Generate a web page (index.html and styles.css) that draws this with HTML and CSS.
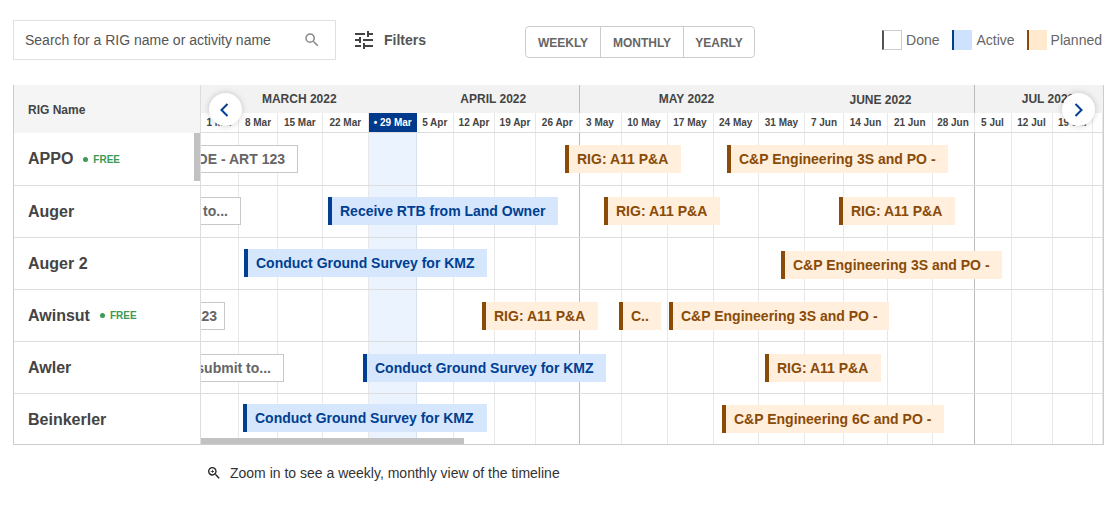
FILE: index.html
```html
<!DOCTYPE html>
<html lang="en">
<head>
  <meta charset="UTF-8">
  <title>RIG Schedule</title>
  <link rel="stylesheet" href="styles.css">
</head>
<body>

  <div class="toolbar">
    <div class="search">
      <span>Search for a RIG name or activity name</span>
      <svg class="search-icon" width="18" height="18" viewBox="0 0 24 24"><path d="M15.5 14h-.79l-.28-.27A6.47 6.47 0 0 0 16 9.5 6.5 6.5 0 1 0 9.5 16c1.61 0 3.09-.59 4.23-1.57l.27.28v.79l5 4.99L20.49 19l-4.99-5zm-6 0C7.01 14 5 11.99 5 9.5S7.01 5 9.5 5 14 7.01 14 9.5 11.99 14 9.5 14z"/></svg>
    </div>
    <div class="filters">
      <svg width="24" height="24" viewBox="0 0 24 24"><path d="M3 17v2h6v-2H3zM3 5v2h10V5H3zm10 16v-2h8v-2h-8v-2h-2v6h2zM7 9v2H3v2h4v2h2V9H7zm14 4v-2H11v2h10zm-6-4h2V7h4V5h-4V3h-2v6z"/></svg>
      <span>Filters</span>
    </div>
    <div class="views">
      <div class="view view-w">WEEKLY</div>
      <div class="view view-m">MONTHLY</div>
      <div class="view view-y">YEARLY</div>
    </div>
    <div class="legend">
      <div class="legend-item"><i class="swatch done"></i>Done</div>
      <div class="legend-item"><i class="swatch active"></i>Active</div>
      <div class="legend-item"><i class="swatch planned"></i>Planned</div>
    </div>
  </div>

  <div class="gantt">
    <div class="names">
      <div class="names-head">RIG Name</div>
      <div class="name name-first">APPO <span class="free">FREE</span></div>
      <div class="name">Auger</div>
      <div class="name">Auger 2</div>
      <div class="name">Awinsut <span class="free">FREE</span></div>
      <div class="name">Awler</div>
      <div class="name name-last">Beinkerler</div>
      <div class="vscroll"></div>
    </div>

    <div class="timeline">
      <div class="months">
        <div class="month" style="width:215.5px;padding-right:19px">MARCH 2022</div>
        <div class="month" style="width:162.5px;padding-right:9px">APRIL 2022</div>
        <div class="month month-start" style="width:226px;padding-right:12px">MAY 2022</div>
        <div class="month month-low" style="width:169px;padding-right:18px">JUNE 2022</div>
        <div class="month month-start" style="width:129px;padding-left:18px">JUL 2022</div>
      </div>
      <div class="weeks">
        <div class="week" style="width:38px">1 Mar</div>
        <div class="week" style="width:39px">8 Mar</div>
        <div class="week" style="width:44.5px">15 Mar</div>
        <div class="week" style="width:46.5px">22 Mar</div>
        <div class="week today" style="width:47.5px">• 29 Mar</div>
        <div class="week" style="width:37.5px">5 Apr</div>
        <div class="week" style="width:41px">12 Apr</div>
        <div class="week" style="width:41px">19 Apr</div>
        <div class="week" style="width:43.5px">26 Apr</div>
        <div class="week" style="width:42px">3 May</div>
        <div class="week" style="width:46px">10 May</div>
        <div class="week" style="width:46px">17 May</div>
        <div class="week" style="width:45.5px">24 May</div>
        <div class="week" style="width:46px">31 May</div>
        <div class="week" style="width:39px">7 Jun</div>
        <div class="week" style="width:44px">14 Jun</div>
        <div class="week" style="width:44.5px">21 Jun</div>
        <div class="week" style="width:42px">28 Jun</div>
        <div class="week" style="width:37px">5 Jul</div>
        <div class="week" style="width:41px">12 Jul</div>
        <div class="week" style="width:40.5px">19 Jul</div>
        <div class="week" style="width:10px"></div>
      </div>

      <div class="body">
        <div class="columns">
          <div class="col" style="width:38px"></div>
          <div class="col" style="width:39px"></div>
          <div class="col" style="width:44.5px"></div>
          <div class="col" style="width:46.5px"></div>
          <div class="col col-today" style="width:47.5px"></div>
          <div class="col" style="width:37.5px"></div>
          <div class="col" style="width:41px"></div>
          <div class="col" style="width:41px"></div>
          <div class="col col-end" style="width:43.5px"></div>
          <div class="col" style="width:42px"></div>
          <div class="col" style="width:46px"></div>
          <div class="col" style="width:46px"></div>
          <div class="col" style="width:45.5px"></div>
          <div class="col" style="width:46px"></div>
          <div class="col" style="width:39px"></div>
          <div class="col" style="width:44px"></div>
          <div class="col" style="width:44.5px"></div>
          <div class="col col-end" style="width:42px"></div>
          <div class="col" style="width:37px"></div>
          <div class="col" style="width:41px"></div>
          <div class="col" style="width:40.5px"></div>
          <div class="col" style="width:10px"></div>
        </div>

        <div class="row row-first">
          <div class="bar bar-done" style="left:-61px;width:158px;top:12px">FOE - ART 123</div>
          <div class="bar bar-planned" style="left:364px;width:116px;top:12px">RIG: A11 P&amp;A</div>
          <div class="bar bar-planned" style="left:526px;width:221px;top:12px">C&amp;P Engineering 3S and PO -</div>
        </div>
        <div class="row">
          <div class="bar bar-done" style="left:-61px;width:101px;top:11px">submit to...</div>
          <div class="bar bar-active" style="left:127px;width:230px;top:11px">Receive RTB from Land Owner</div>
          <div class="bar bar-planned" style="left:403px;width:116px;top:11px">RIG: A11 P&amp;A</div>
          <div class="bar bar-planned" style="left:638px;width:116px;top:11px">RIG: A11 P&amp;A</div>
        </div>
        <div class="row">
          <div class="bar bar-active" style="left:43px;width:243px;top:11px">Conduct Ground Survey for KMZ</div>
          <div class="bar bar-planned" style="left:580px;width:221px;top:13px">C&amp;P Engineering 3S and PO -</div>
        </div>
        <div class="row">
          <div class="bar bar-done bar-short" style="left:-61px;width:85px;top:12px">123</div>
          <div class="bar bar-planned" style="left:281px;width:116px;top:12px">RIG: A11 P&amp;A</div>
          <div class="bar bar-planned" style="left:418px;width:42px;top:12px">C..</div>
          <div class="bar bar-planned" style="left:468px;width:220px;top:12px">C&amp;P Engineering 3S and PO -</div>
        </div>
        <div class="row">
          <div class="bar bar-done" style="left:-61px;width:144px;top:12px">submit to...</div>
          <div class="bar bar-active" style="left:162px;width:243px;top:12px">Conduct Ground Survey for KMZ</div>
          <div class="bar bar-planned" style="left:564px;width:116px;top:12px">RIG: A11 P&amp;A</div>
        </div>
        <div class="row row-last">
          <div class="bar bar-active" style="left:42px;width:244px;top:10px">Conduct Ground Survey for KMZ</div>
          <div class="bar bar-planned" style="left:521px;width:222px;top:11px">C&amp;P Engineering 6C and PO -</div>
        </div>
        <div class="hscroll"></div>
      </div>

      <button class="nav nav-prev"><svg width="18" height="18" viewBox="0 0 18 18"><path d="M10.5 3l-6 6 6 6" /></svg></button>
      <button class="nav nav-next"><svg width="18" height="18" viewBox="0 0 18 18"><path d="M5.5 3l6 6-6 6" /></svg></button>
    </div>
  </div>

  <div class="hint">
    <svg width="16" height="16" viewBox="0 0 24 24"><path d="M15.5 14h-.79l-.28-.27A6.47 6.47 0 0 0 16 9.5 6.5 6.5 0 1 0 9.5 16c1.61 0 3.09-.59 4.23-1.57l.27.28v.79l5 4.99L20.49 19l-4.99-5zm-6 0C7.01 14 5 11.99 5 9.5S7.01 5 9.5 5 14 7.01 14 9.5 11.99 14 9.5 14z"/><path d="M12 10h-2v2H9v-2H7V9h2V7h1v2h2v1z"/></svg>
    <span>Zoom in to see a weekly, monthly view of the timeline</span>
  </div>

</body>
</html>
```

FILE: styles.css
```css
* {
  box-sizing: border-box;
}
body {
  font-family: "Liberation Sans", Arial, sans-serif;
  color: #444;
  background-color: #fff;
  margin: 0;
  padding: 20px 16px 0 13px;
  overflow: hidden;
}

/* top bar */
.toolbar {
  display: flex;
  align-items: center;
  height: 40px;
}
.search {
  width: 323px;
  height: 40px;
  border: 1px solid #e0e0e0;
  padding: 0 14px 0 11px;
  display: flex;
  align-items: center;
  justify-content: space-between;
  font-size: 14px;
  color: #555;
}
.search-icon {
  fill: #8a8a8a;
}
.filters {
  display: flex;
  align-items: center;
  gap: 8px;
  margin-left: 16px;
  font-size: 14px;
  font-weight: bold;
  color: #555;
}
.filters svg {
  fill: #444;
}
.views {
  display: flex;
  margin-left: 99px;
  height: 32px;
  margin-top: 4px;
  border: 1px solid #ccc;
  border-radius: 4px;
}
.view {
  display: flex;
  align-items: center;
  justify-content: center;
  font-size: 12px;
  font-weight: bold;
  color: #666;
  border-right: 1px solid #ccc;
  padding-top: 2px;
}
.view-w { width: 75px; }
.view-m { width: 83px; }
.view-y { width: 70px; border-right: none; }
.legend {
  display: flex;
  margin-left: auto;
  padding-right: 2px;
  gap: 12px;
  font-size: 14px;
  color: #666;
}
.legend-item {
  display: flex;
  align-items: center;
  gap: 4px;
}
.legend-item:first-child {
  margin-right: 1px;
}
.swatch {
  display: block;
  width: 20px;
  height: 20px;
  border-left: 2px solid;
}
.swatch.done {
  border: 1px solid #ccc;
  border-left: 2px solid #555;
}
.swatch.active {
  background-color: #cfe2fd;
  border-left-color: #003f91;
}
.swatch.planned {
  background-color: #ffe9cf;
  border-left-color: #8a4b08;
}

/* chart */
.gantt {
  display: flex;
  width: 1091px;
  height: 360px;
  margin-top: 25px;
  border-left: 1px solid #ccc;
  border-right: 1px solid #ccc;
  border-bottom: 1px solid #ccc;
}
.names {
  position: relative;
  width: 187px;
  flex-shrink: 0;
  border-right: 1px solid #ddd;
}
.names-head {
  height: 48px;
  background-color: #f5f5f5;
  padding-left: 14px;
  display: flex;
  align-items: center;
  font-size: 12px;
  font-weight: bold;
  padding-top: 2px;
}
.name {
  height: 52px;
  padding-left: 14px;
  display: flex;
  align-items: center;
  gap: 10px;
  font-size: 16px;
  font-weight: bold;
  border-bottom: 1px solid #ddd;
}
.name-first {
  height: 53px;
}
.name-last {
  height: 50px;
  padding-top: 2px;
  border-bottom: none;
}
.free {
  display: flex;
  align-items: center;
  gap: 5px;
  font-size: 10px;
  color: #3c9a55;
}
.free::before {
  content: "";
  width: 5px;
  height: 5px;
  border-radius: 50%;
  background-color: #3c9a55;
}
.vscroll {
  position: absolute;
  top: 48px;
  right: 0;
  width: 6px;
  height: 48px;
  background-color: #c2c2c2;
}
.timeline {
  position: relative;
  flex: 1;
  min-width: 0;
  overflow: hidden;
}
.months {
  display: flex;
  height: 28px;
  background-color: #f2f2f2;
}
.month {
  display: flex;
  align-items: center;
  justify-content: center;
  flex-shrink: 0;
  font-size: 12px;
  font-weight: bold;
  padding-bottom: 1px;
}
.month-start {
  border-left: 1px solid #bbb;
}
.month-low {
  padding-top: 2px;
}
.weeks {
  display: flex;
  height: 20px;
  border-bottom: 1px solid #ddd;
}
.week {
  flex-shrink: 0;
  display: flex;
  align-items: center;
  justify-content: center;
  font-size: 10px;
  font-weight: bold;
  border-right: 1px solid #e8e8e8;
  white-space: nowrap;
}
.today {
  background-color: #003a8c;
  color: #fff;
  border-right: none;
}
.body {
  position: relative;
  height: 311px;
}
.columns {
  position: absolute;
  top: 0;
  bottom: 0;
  left: 0;
  display: flex;
}
.col {
  flex-shrink: 0;
  border-right: 1px solid #e8e8e8;
}
.col-today {
  background-color: #ebf3fe;
  border-right-color: #d5e2f0;
}
.col-end {
  border-right-color: #bbb;
}
.row {
  position: relative;
  height: 52px;
  border-bottom: 1px solid #ddd;
}
.row-first {
  height: 53px;
}
.row-last {
  height: 50px;
  border-bottom: none;
}
.bar {
  position: absolute;
  height: 28px;
  display: flex;
  align-items: center;
  font-size: 14px;
  font-weight: bold;
  padding-left: 8px;
  white-space: nowrap;
  overflow: hidden;
}
.bar-done {
  background-color: #fff;
  border: 1px solid #c8c8c8;
  color: #666;
  justify-content: flex-end;
  padding-right: 12px;
}
.bar-short {
  padding-right: 7px;
}
.bar-active {
  background-color: #d6e6fd;
  border-left: 4px solid #003f91;
  color: #003f91;
}
.bar-planned {
  background-color: #ffefdc;
  border-left: 4px solid #8a4b08;
  color: #8a4b08;
}
.hscroll {
  position: absolute;
  left: 0;
  bottom: 0;
  width: 263px;
  height: 6px;
  background-color: #c2c2c2;
}
.nav {
  position: absolute;
  top: 8px;
  width: 33px;
  height: 33px;
  padding: 0;
  border: none;
  border-radius: 50%;
  background-color: #fff;
  box-shadow: 0 0 6px rgba(0, 0, 0, 0.2);
  display: flex;
  align-items: center;
  justify-content: center;
}
.nav svg {
  fill: none;
  stroke: #003f91;
  stroke-width: 2;
}
.nav-prev { left: 8px; }
.nav-next { right: 8px; }

/* footer hint */
.hint {
  display: flex;
  align-items: center;
  gap: 8px;
  margin: 20px 0 0 193px;
  font-size: 14px;
  color: #333;
}
.hint svg {
  fill: #222;
}
```
